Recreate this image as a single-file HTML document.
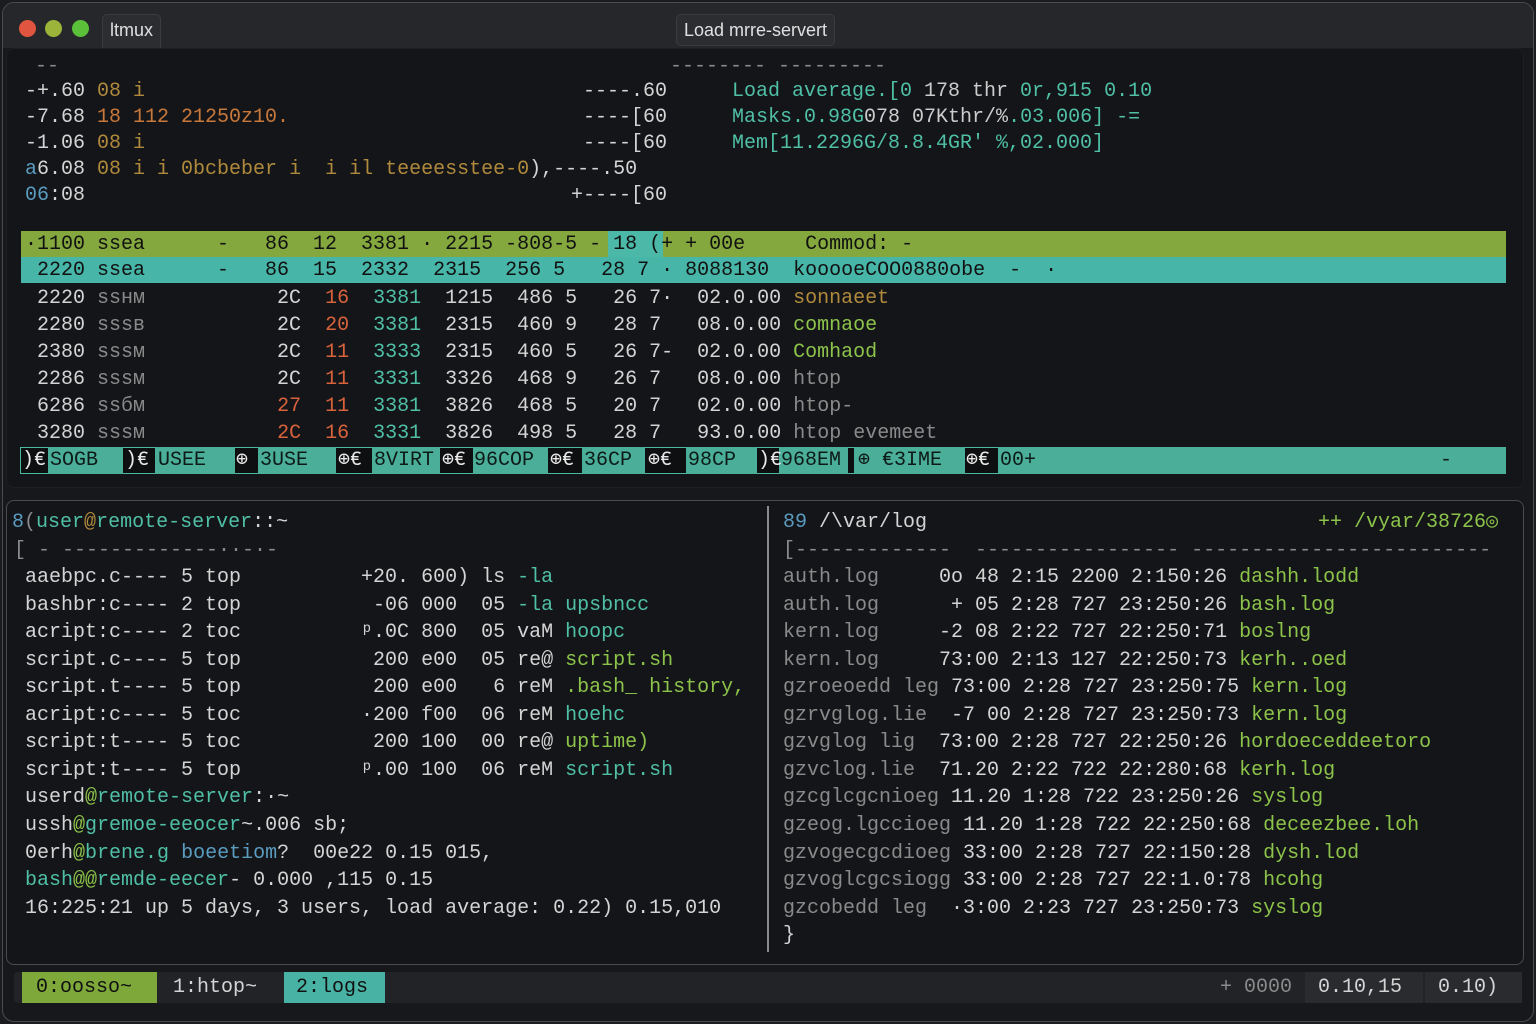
<!DOCTYPE html>
<html><head><meta charset="utf-8"><style>
*{margin:0;padding:0;box-sizing:border-box}
body{width:1536px;height:1024px;background:#1b1c1f;overflow:hidden;position:relative;font-family:"Liberation Mono",monospace;color:#d4d4d4}
.win{position:absolute;left:2px;top:2px;width:1532px;height:1020px;border:1px solid #4a4b4f;border-radius:12px;background:#17181b}
.title{position:absolute;left:3px;top:3px;width:1530px;height:45px;background:#26272b;border-radius:11px 11px 0 0}
.dot{position:absolute;top:20px;width:17px;height:17px;border-radius:50%}
.tab{position:absolute;font-family:"Liberation Sans",sans-serif;font-size:18px;color:#e0e0e0;background:#2c2d31;border:1px solid #3a3b3f;border-radius:5px;height:32px;line-height:30px;padding:0 7px}
.pane{position:absolute;background:#141518;border:1px solid #2e2f33;border-radius:8px}
.l{position:absolute;white-space:pre;font-size:20px;line-height:26px;height:26px}
.g{color:#8cc34a}.t{color:#4fbfa6}.o{color:#c8783a}.y{color:#b08a3c}.r{color:#d8623c}.d{color:#8a8a8a}.b{color:#5a9cc0}
.k{color:#111}
.seg{position:absolute;top:447px;height:27px}
.fk{position:absolute;top:448px;white-space:pre;font-size:20px;line-height:26px;color:#e8e8e8}
.fl{position:absolute;top:448px;white-space:pre;font-size:20px;line-height:26px;color:#0d1a18}
</style></head><body>
<div class="win"></div>
<div class="title"></div>
<div class="dot" style="left:19px;background:#e0553f"></div>
<div class="dot" style="left:45px;background:#9cb43a"></div>
<div class="dot" style="left:72px;background:#5bbf3a"></div>
<div class="tab" style="left:102px;top:14px;border-bottom:none;border-radius:5px 5px 0 0;height:34px">ltmux</div>
<div class="tab" style="left:676px;top:14px">Load mrre-servert</div>

<!-- top pane -->
<div class="pane" style="left:6px;top:48px;width:1518px;height:440px;border-color:#1e1f22"></div>
<div class="l d" style="left:35px;top:54px">--</div>
<div class="l d" style="left:670px;top:54px">-------- ---------</div>
<div class="l" style="left:25px;top:79px">-+.60 <span class="y">08 i</span></div>
<div class="l" style="left:25px;top:105px">-7.68 <span class="o">18 112 21250z10.</span></div>
<div class="l" style="left:25px;top:131px">-1.06 <span class="y">08 i</span></div>
<div class="l" style="left:25px;top:157px"><span class="b">a</span>6.08 <span class="y">08 i i 0bcbeber i  i il teeeesstee-0</span>),----.50</div>
<div class="l" style="left:25px;top:183px"><span class="b">06</span>:08</div>
<div class="l" style="left:583px;top:79px">----.60</div>
<div class="l" style="left:583px;top:105px">----[60</div>
<div class="l" style="left:583px;top:131px">----[60</div>
<div class="l" style="left:571px;top:183px">+----[60</div>
<div class="l t" style="left:732px;top:79px">Load average.[0 <span style="color:#ccc">178 thr</span> 0r,915 0.10</div>
<div class="l t" style="left:732px;top:105px">Masks.0.98G<span style="color:#ccc">078 07Kthr/%</span>.03.006] -=</div>
<div class="l t" style="left:732px;top:131px">Mem[11.2296G/8.8.4GR' %,02.000]</div>

<div style="position:absolute;left:21px;top:231px;width:1485px;height:26px;background:#84a83e"></div>
<div style="position:absolute;left:608px;top:231px;width:55px;height:26px;background:#4bb8a8"></div>
<div style="position:absolute;left:21px;top:257px;width:1485px;height:26px;background:#47b6a8"></div>
<div class="l k" style="left:25px;top:232px">·1100 ssea      -   86  12  3381 · 2215 -808-5 - 18 (+ + 00e     Commod: -</div>
<div class="l k" style="left:25px;top:258px"> 2220 ssea      -   86  15  2332  2315  256 5   28 7 · 8088130  kooooeCOO0880obe  -  ·</div>
<div class="l" style="left:37px;top:286px">2220 <span class="d">ssнм</span>           2C  <span class="r">16</span>  <span class="t">3381</span>  1215  486 5   26 7·  02.0.00 <span class="y">sonnaeet</span></div>
<div class="l" style="left:37px;top:313px">2280 <span class="d">sssв</span>           2C  <span class="r">20</span>  <span class="t">3381</span>  2315  460 9   28 7   08.0.00 <span class="g">comnaoe</span></div>
<div class="l" style="left:37px;top:340px">2380 <span class="d">sssм</span>           2C  <span class="r">11</span>  <span class="t">3333</span>  2315  460 5   26 7-  02.0.00 <span class="g">Comhaod</span></div>
<div class="l" style="left:37px;top:367px">2286 <span class="d">sssм</span>           2C  <span class="r">11</span>  <span class="t">3331</span>  3326  468 9   26 7   08.0.00 <span class="d">htop</span></div>
<div class="l" style="left:37px;top:394px">6286 <span class="d">ssбм</span>           <span class="r">27</span>  <span class="r">11</span>  <span class="t">3381</span>  3826  468 5   20 7   02.0.00 <span class="d">htop-</span></div>
<div class="l" style="left:37px;top:421px">3280 <span class="d">sssм</span>           <span class="r">2C</span>  <span class="r">16</span>  <span class="t">3331</span>  3826  498 5   28 7   93.0.00 <span class="d">htop evemeet</span></div>

<div class="seg" style="left:20px;width:1486px;background:#0e0f10;border:1px solid #4bb8a0"></div>
<div class="seg" style="left:48px;width:75px;background:#4aae98"></div>
<div class="seg" style="left:155px;width:80px;background:#4aae98"></div>
<div class="seg" style="left:258px;width:78px;background:#4aae98"></div>
<div class="seg" style="left:372px;width:68px;background:#4aae98"></div>
<div class="seg" style="left:473px;width:75px;background:#4aae98"></div>
<div class="seg" style="left:582px;width:63px;background:#4aae98"></div>
<div class="seg" style="left:686px;width:71px;background:#4aae98"></div>
<div class="seg" style="left:779px;width:69px;background:#4aae98"></div>
<div class="seg" style="left:854px;width:111px;background:#4aae98"></div>
<div class="seg" style="left:998px;width:508px;background:#4aae98"></div>
<div class="fk" style="left:22px">)€</div><div class="fl" style="left:50px">SOGB</div>
<div class="fk" style="left:125px">)€</div><div class="fl" style="left:158px">USEE</div>
<div class="fk" style="left:236px">⊕</div><div class="fl" style="left:260px">3USE</div>
<div class="fk" style="left:338px">⊕€</div><div class="fl" style="left:374px">8VIRT</div>
<div class="fk" style="left:442px">⊕€</div><div class="fl" style="left:474px">96COP</div>
<div class="fk" style="left:550px">⊕€</div><div class="fl" style="left:584px">36CP</div>
<div class="fk" style="left:648px">⊕€</div><div class="fl" style="left:688px">98CP</div>
<div class="fk" style="left:758px">)€</div><div class="fl" style="left:781px">968EM</div>
<div class="fk" style="left:856px"></div><div class="fl" style="left:858px">⊕ €3IME</div>
<div class="fk" style="left:966px">⊕€</div><div class="fl" style="left:1000px">00+</div>
<div class="fl" style="left:1440px">-</div>

<!-- bottom pane -->
<div class="pane" style="left:6px;top:500px;width:1518px;height:465px;border-color:#4a4b4f"></div>
<div style="position:absolute;left:767px;top:506px;width:2px;height:446px;background:#8a8a8a"></div>
<div class="l" style="left:12px;top:510px"><span class="b">8</span><span class="d">(</span><span class="t">user</span><span class="y">@</span><span class="t">remote-server</span>::~</div>
<div class="l d" style="left:14px;top:538px">[ - -------------··-·-</div>
<div class="l" style="left:25px;top:565px">aaebpc.c---- 5 top          +20. 600) ls <span class="t">-la</span></div>
<div class="l" style="left:25px;top:593px">bashbr:c---- 2 top           -06 000  05 <span class="t">-la upsbncc</span></div>
<div class="l" style="left:25px;top:620px">acript:c---- 2 toc          ᵖ.0C 800  05 vaM <span class="t">hoopc</span></div>
<div class="l" style="left:25px;top:648px">script.c---- 5 top           200 e00  05 re@ <span class="g">script.sh</span></div>
<div class="l" style="left:25px;top:675px">script.t---- 5 top           200 e00   6 reM <span class="g">.bash_ history,</span></div>
<div class="l" style="left:25px;top:703px">acript:c---- 5 toc          ·200 f00  06 reM <span class="t">hoehc</span></div>
<div class="l" style="left:25px;top:730px">script:t---- 5 toc           200 100  00 re@ <span class="g">uptime)</span></div>
<div class="l" style="left:25px;top:758px">script:t---- 5 top          ᵖ.00 100  06 reM <span class="t">script.sh</span></div>
<div class="l" style="left:25px;top:785px">userd<span class="g">@</span><span class="t">remote-server</span>:·~</div>
<div class="l" style="left:25px;top:813px">ussh<span class="g">@</span><span class="t">gremoe-eeocer</span>~.006 sb;</div>
<div class="l" style="left:25px;top:841px">0erh<span class="g">@</span><span class="t">brene.g</span> <span class="b">boeetiom</span>?  00e22 0.15 015,</div>
<div class="l" style="left:25px;top:868px"><span class="t">bash</span><span class="g">@@</span><span class="t">remde-eecer</span>- 0.000 ,115 0.15</div>
<div class="l" style="left:25px;top:896px">16:225:21 up 5 days, 3 users, load average: 0.22) 0.15,010</div>

<div class="l" style="left:783px;top:510px"><span class="b">89</span> /\var/log</div>
<div class="l g" style="left:1318px;top:510px">++ /vyar/38726◎</div>
<div class="l d" style="left:783px;top:538px">[-------------  ----------------- -------------------------</div>
<div class="l" style="left:783px;top:565px"><span class="d">auth.log</span>     0o 48 2:15 2200 2:150:26 <span class="g">dashh.lodd</span></div>
<div class="l" style="left:783px;top:593px"><span class="d">auth.log</span>      + 05 2:28 727 23:250:26 <span class="g">bash.log</span></div>
<div class="l" style="left:783px;top:620px"><span class="d">kern.log</span>     -2 08 2:22 727 22:250:71 <span class="g">boslng</span></div>
<div class="l" style="left:783px;top:648px"><span class="d">kern.log</span>     73:00 2:13 127 22:250:73 <span class="g">kerh..oed</span></div>
<div class="l" style="left:783px;top:675px"><span class="d">gzroeoedd leg</span> 73:00 2:28 727 23:250:75 <span class="g">kern.log</span></div>
<div class="l" style="left:783px;top:703px"><span class="d">gzrvglog.lie</span>  -7 00 2:28 727 23:250:73 <span class="g">kern.log</span></div>
<div class="l" style="left:783px;top:730px"><span class="d">gzvglog lig</span>  73:00 2:28 727 22:250:26 <span class="g">hordoeceddeetoro</span></div>
<div class="l" style="left:783px;top:758px"><span class="d">gzvclog.lie</span>  71.20 2:22 722 22:280:68 <span class="g">kerh.log</span></div>
<div class="l" style="left:783px;top:785px"><span class="d">gzcglcgcnioeg</span> 11.20 1:28 722 23:250:26 <span class="g">syslog</span></div>
<div class="l" style="left:783px;top:813px"><span class="d">gzeog.lgccioeg</span> 11.20 1:28 722 22:250:68 <span class="g">deceezbee.loh</span></div>
<div class="l" style="left:783px;top:841px"><span class="d">gzvogecgcdioeg</span> 33:00 2:28 727 22:150:28 <span class="g">dysh.lod</span></div>
<div class="l" style="left:783px;top:868px"><span class="d">gzvoglcgcsiogg</span> 33:00 2:28 727 22:1.0:78 <span class="g">hcohg</span></div>
<div class="l" style="left:783px;top:896px"><span class="d">gzcobedd leg</span>  ·3:00 2:23 727 23:250:73 <span class="g">syslog</span></div>
<div class="l" style="left:783px;top:923px">}</div>

<!-- status bar -->
<div style="position:absolute;left:14px;top:972px;width:1508px;height:31px;background:#222327;border-radius:4px"></div>
<div style="position:absolute;left:22px;top:972px;width:135px;height:31px;background:#7ea83a"></div>
<div style="position:absolute;left:284px;top:972px;width:101px;height:31px;background:#48b2a4"></div>
<div style="position:absolute;left:1305px;top:972px;width:118px;height:31px;background:#2a2b2f"></div>
<div style="position:absolute;left:1425px;top:972px;width:97px;height:31px;background:#2a2b2f"></div>
<div class="l k" style="left:36px;top:975px">0:oosso~</div>
<div class="l" style="left:173px;top:975px">1:htop~</div>
<div class="l k" style="left:296px;top:975px">2:logs</div>
<div class="l d" style="left:1220px;top:975px">+ 0000</div>
<div class="l" style="left:1318px;top:975px">0.10,15</div>
<div class="l" style="left:1438px;top:975px">0.10)</div>
</body></html>
